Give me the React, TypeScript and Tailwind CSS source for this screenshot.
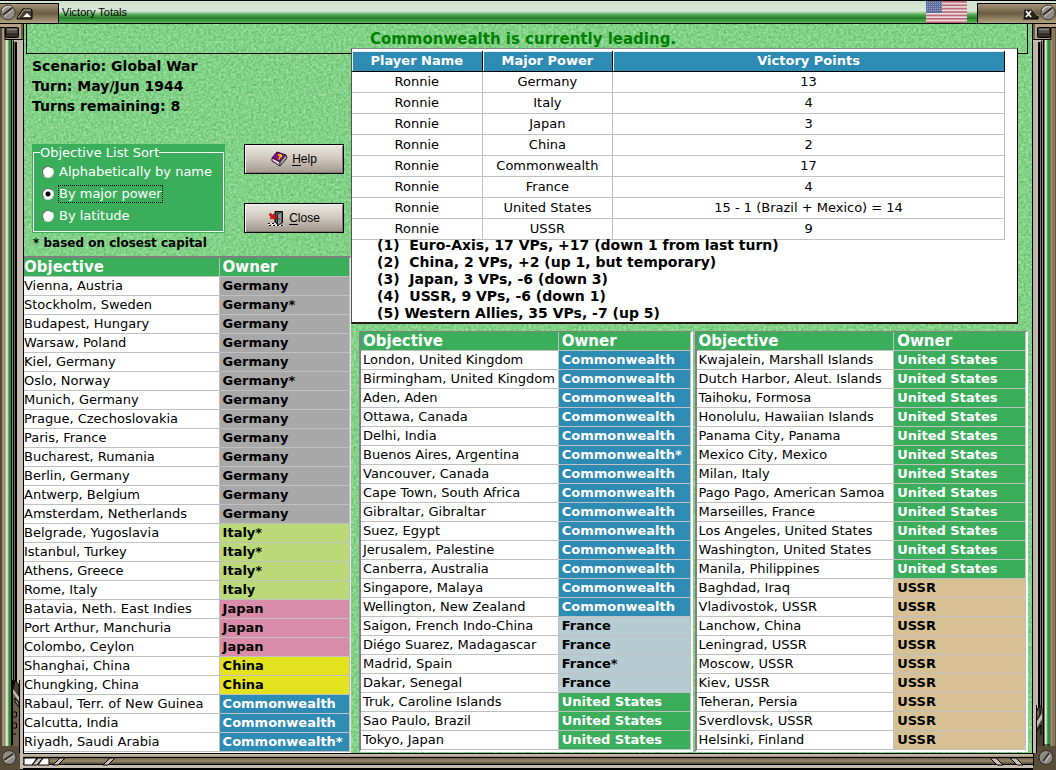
import { useState } from "react";
import type { ReactNode } from "react";

type Row = [objective: string, owner: string];

const OWNER_STYLES: Record<string, string> = {
  Germany: "bg-[#a8a8a8] text-black",
  Italy: "bg-[#bcd97a] text-black",
  Japan: "bg-[#d98ca7] text-black",
  China: "bg-[#e2e21e] text-black",
  Commonwealth: "bg-[#2e8bb4] text-white",
  France: "bg-[#b6cbd2] text-black",
  "United States": "bg-[#3aae5b] text-white",
  USSR: "bg-[#d6c094] text-black",
};

const STANDINGS = [
  ["Ronnie", "Germany", "13"],
  ["Ronnie", "Italy", "4"],
  ["Ronnie", "Japan", "3"],
  ["Ronnie", "China", "2"],
  ["Ronnie", "Commonwealth", "17"],
  ["Ronnie", "France", "4"],
  ["Ronnie", "United States", "15 - 1 (Brazil + Mexico) = 14"],
  ["Ronnie", "USSR", "9"],
];

const NOTES = [
  "(1)  Euro-Axis, 17 VPs, +17 (down 1 from last turn)",
  "(2)  China, 2 VPs, +2 (up 1, but temporary)",
  "(3)  Japan, 3 VPs, -6 (down 3)",
  "(4)  USSR, 9 VPs, -6 (down 1)",
  "(5) Western Allies, 35 VPs, -7 (up 5)",
];

const LEFT_ROWS: Row[] = [
  ["Vienna, Austria", "Germany"],
  ["Stockholm, Sweden", "Germany*"],
  ["Budapest, Hungary", "Germany"],
  ["Warsaw, Poland", "Germany"],
  ["Kiel, Germany", "Germany"],
  ["Oslo, Norway", "Germany*"],
  ["Munich, Germany", "Germany"],
  ["Prague, Czechoslovakia", "Germany"],
  ["Paris, France", "Germany"],
  ["Bucharest, Rumania", "Germany"],
  ["Berlin, Germany", "Germany"],
  ["Antwerp, Belgium", "Germany"],
  ["Amsterdam, Netherlands", "Germany"],
  ["Belgrade, Yugoslavia", "Italy*"],
  ["Istanbul, Turkey", "Italy*"],
  ["Athens, Greece", "Italy*"],
  ["Rome, Italy", "Italy"],
  ["Batavia, Neth. East Indies", "Japan"],
  ["Port Arthur, Manchuria", "Japan"],
  ["Colombo, Ceylon", "Japan"],
  ["Shanghai, China", "China"],
  ["Chungking, China", "China"],
  ["Rabaul, Terr. of New Guinea", "Commonwealth"],
  ["Calcutta, India", "Commonwealth"],
  ["Riyadh, Saudi Arabia", "Commonwealth*"],
];

const MIDDLE_ROWS: Row[] = [
  ["London, United Kingdom", "Commonwealth"],
  ["Birmingham, United Kingdom", "Commonwealth"],
  ["Aden, Aden", "Commonwealth"],
  ["Ottawa, Canada", "Commonwealth"],
  ["Delhi, India", "Commonwealth"],
  ["Buenos Aires, Argentina", "Commonwealth*"],
  ["Vancouver, Canada", "Commonwealth"],
  ["Cape Town, South Africa", "Commonwealth"],
  ["Gibraltar, Gibraltar", "Commonwealth"],
  ["Suez, Egypt", "Commonwealth"],
  ["Jerusalem, Palestine", "Commonwealth"],
  ["Canberra, Australia", "Commonwealth"],
  ["Singapore, Malaya", "Commonwealth"],
  ["Wellington, New Zealand", "Commonwealth"],
  ["Saigon, French Indo-China", "France"],
  ["Diégo Suarez, Madagascar", "France"],
  ["Madrid, Spain", "France*"],
  ["Dakar, Senegal", "France"],
  ["Truk, Caroline Islands", "United States"],
  ["Sao Paulo, Brazil", "United States"],
  ["Tokyo, Japan", "United States"],
];

const RIGHT_ROWS: Row[] = [
  ["Kwajalein, Marshall Islands", "United States"],
  ["Dutch Harbor, Aleut. Islands", "United States"],
  ["Taihoku, Formosa", "United States"],
  ["Honolulu, Hawaiian Islands", "United States"],
  ["Panama City, Panama", "United States"],
  ["Mexico City, Mexico", "United States"],
  ["Milan, Italy", "United States"],
  ["Pago Pago, American Samoa", "United States"],
  ["Marseilles, France", "United States"],
  ["Los Angeles, United States", "United States"],
  ["Washington, United States", "United States"],
  ["Manila, Philippines", "United States"],
  ["Baghdad, Iraq", "USSR"],
  ["Vladivostok, USSR", "USSR"],
  ["Lanchow, China", "USSR"],
  ["Leningrad, USSR", "USSR"],
  ["Moscow, USSR", "USSR"],
  ["Kiev, USSR", "USSR"],
  ["Teheran, Persia", "USSR"],
  ["Sverdlovsk, USSR", "USSR"],
  ["Helsinki, Finland", "USSR"],
];

const SORTS = ["Alphabetically by name", "By major power", "By latitude"];

export default function App() {
  return (
    <div className="flex min-h-screen flex-col bg-black font-['DejaVu_Sans',Verdana,sans-serif] text-black">
      <TitleBar />
      <div className="flex grow">
        <LeftRail />
        <main className="relative isolate min-w-0 grow bg-[#7dd083]">
          <Texture />
          <header className="mr-1 ml-[2px] h-[30px] border border-t-0 border-black pr-2 text-center text-[15px] leading-[30px] font-bold text-[#008000]">
            Commonwealth is currently leading.
          </header>
          <div className="grid grid-cols-[327fr_681fr]">
            <div className="flex min-w-0 flex-col">
              <Summary />
              <ObjectiveTable rows={LEFT_ROWS} flush />
            </div>
            <div className="-mt-[6px] flex min-w-0 flex-col gap-[7px]">
              <Standings />
              <div className="mr-1 ml-2 grid grid-cols-2 gap-[2px]">
                <ObjectiveTable rows={MIDDLE_ROWS} />
                <ObjectiveTable rows={RIGHT_ROWS} />
              </div>
            </div>
          </div>
        </main>
        <RightRail />
      </div>
      <BottomBar />
    </div>
  );
}

function Texture() {
  return (
    <svg className="absolute inset-0 -z-10 h-full w-full" aria-hidden="true">
      <filter id="grain" x="0" y="0" width="100%" height="100%" colorInterpolationFilters="sRGB">
        <feTurbulence type="fractalNoise" baseFrequency="0.4" numOctaves="2" seed="4" />
        <feColorMatrix values="0.42 0 0 0 0.3  0.22 0 0 0 0.71  0.4 0 0 0 0.33  0 0 0 0 1" />
      </filter>
      <rect width="100%" height="100%" filter="url(#grain)" />
    </svg>
  );
}

function Summary() {
  const [sort, setSort] = useState(SORTS[1]);

  return (
    <section className="h-[202px] pt-[2px] pl-2">
      <div className="h-[88px] text-sm leading-5 font-bold">
        <p>Scenario: Global War</p>
        <p>Turn: May/Jun 1944</p>
        <p>Turns remaining: 8</p>
      </div>
      <div className="flex justify-between pr-[7px]">
        <div className="h-[89px] w-[193px] bg-[#3aae5b] px-px text-[13px] text-white">
          <fieldset className="h-[88px] border border-white pl-2">
            <legend className="-ml-[2px] leading-[17px]">Objective List Sort</legend>
            {SORTS.map((name) => (
              <label key={name} className="flex h-[22px] items-center gap-1 whitespace-nowrap">
                <input
                  type="radio"
                  name="sort"
                  checked={sort === name}
                  onChange={() => setSort(name)}
                  className="size-3 shrink-0 appearance-none rounded-full border border-t-[#666] border-r-[#ddd] border-b-[#ddd] border-l-[#666] bg-white checked:bg-[radial-gradient(circle,#000_2px,#fff_3px)]"
                />
                <span
                  className={
                    sort === name
                      ? "border border-dotted border-black leading-[16px]"
                      : "border border-transparent leading-[16px]"
                  }
                >
                  {name}
                </span>
              </label>
            ))}
          </fieldset>
        </div>
        <div className="flex flex-col justify-between">
          <PushButton icon={<BookIcon />} hotkey="H" rest="elp" />
          <PushButton icon={<DoorIcon />} hotkey="C" rest="lose" />
        </div>
      </div>
      <p className="pl-px text-xs leading-[21px] font-bold">* based on closest capital</p>
    </section>
  );
}

function PushButton({ icon, hotkey, rest }: { icon: ReactNode; hotkey: string; rest: string }) {
  return (
    <button
      type="button"
      className="flex h-[30px] w-[100px] items-center justify-center gap-1 border border-black bg-linear-to-b from-[#ece7e0] via-[#cfc7be] to-[#a0968b] font-['Liberation_Sans',Arial,sans-serif] text-xs shadow-[inset_1px_1px_0_#f4f0ea,inset_-1px_-1px_0_#857b70]"
    >
      {icon}
      <span>
        <span className="underline underline-offset-2">{hotkey}</span>
        {rest}
      </span>
    </button>
  );
}

function Standings() {
  return (
    <section className="mr-[14px] h-[276px] border-t border-r border-b-2 border-l border-t-[#888] border-r-black border-b-[#2a1a14] border-l-[#555] bg-white pt-[2px]">
      <div className="pr-3">
        <table className="w-full table-fixed border-separate border-spacing-0 text-center text-[13px]">
          <thead>
            <tr className="h-[21px] bg-[#2e8bb4] text-white">
              <StandingHead className="w-[20%]">Player Name</StandingHead>
              <StandingHead className="w-[20%]">Major Power</StandingHead>
              <StandingHead>Victory Points</StandingHead>
            </tr>
          </thead>
          <tbody>
            {STANDINGS.map(([player, power, points]) => (
              <tr key={power} className="h-[21px]">
                {[player, power, points].map((cell, i) => (
                  <td key={i} className="border-r border-b border-[#c0c0c0] p-0 leading-5">
                    {cell}
                  </td>
                ))}
              </tr>
            ))}
          </tbody>
        </table>
      </div>
      <div className="-mt-[3px] pl-[25px] text-sm leading-[17px] font-bold whitespace-pre">
        {NOTES.map((note) => (
          <p key={note}>{note}</p>
        ))}
      </div>
    </section>
  );
}

function StandingHead({ className = "", children }: { className?: string; children: ReactNode }) {
  return (
    <th
      className={`border-r border-b border-black p-0 leading-5 font-bold shadow-[inset_1px_1px_0_#e8f2f6] ${className}`}
    >
      {children}
    </th>
  );
}

function ObjectiveTable({ rows, flush = false }: { rows: Row[]; flush?: boolean }) {
  const frame = flush
    ? "border-t-2 border-r border-b border-t-[#808080] border-r-[#e8e8e8] border-b-white"
    : "border-t border-r-2 border-b-2 border-l-2 border-t-[#808080] border-r-white border-b-white border-l-[#808080]";
  const pad = flush ? "pl-0" : "pl-[2px]";

  return (
    <div className={`min-w-0 bg-white ${frame}`}>
      <table className="w-full table-fixed border-separate border-spacing-0 text-left text-[13px] whitespace-nowrap">
        <thead>
          <tr className="h-[19px] bg-[#3aae5b] text-[15px] text-white">
            <th className={`w-[60%] border-r border-b border-[#c0c0c0] py-0 pr-0 leading-[18px] ${pad}`}>Objective</th>
            <th className="border-r border-b border-[#c0c0c0] py-0 pr-0 pl-[3px] leading-[18px]">Owner</th>
          </tr>
        </thead>
        <tbody>
          {rows.map(([objective, owner]) => (
            <tr key={objective} className="h-[19px]">
              <td className={`border-r border-b border-[#c0c0c0] py-0 pr-0 leading-[18px] ${pad}`}>{objective}</td>
              <td
                className={`border-r border-b border-[#c0c0c0] py-0 pr-0 pl-[3px] leading-[18px] font-bold ${OWNER_STYLES[owner.replace("*", "")]}`}
              >
                {owner}
              </td>
            </tr>
          ))}
        </tbody>
      </table>
    </div>
  );
}

function TitleBar() {
  return (
    <div className="flex h-6 items-stretch border-t border-b border-black bg-[linear-gradient(#cfe3cd_0px,#d9e8d8_10px,#8cc68c_12px,#4ba64d_14px,#2b7c2d_17px,#3c983f_19px,#58b85b_22px)]">
      <div className="mt-[2px] flex w-[59px] items-center border-t border-r border-black bg-linear-to-b from-[#a59474] via-[#6b5c42] to-[#b3a282]">
        <Screw />
        <button type="button" aria-label="Roll up">
          <svg width="18" height="14" viewBox="0 0 18 14">
            <path d="M1 11 L7 2 H15 L16 3 V12 H1 Z" fill="#453c2f" stroke="#000" />
            <path d="M2 11 L8 3 H15" fill="none" stroke="#c8bda5" />
            <path d="M7 10 L11 6 L15 10 Z" fill="#fff" />
          </svg>
        </button>
      </div>
      <h1 className="grow pl-[3px] font-['Liberation_Sans',Arial,sans-serif] text-[11px] leading-[22px]">
        Victory Totals
      </h1>
      <Flag />
      <div className="mt-[2px] ml-[10px] flex w-[79px] items-center justify-end border-t border-l border-black bg-linear-to-b from-[#a59474] via-[#6b5c42] to-[#b3a282]">
        <button type="button" aria-label="Close window">
          <svg width="18" height="14" viewBox="0 0 18 14">
            <path d="M1 2 H10 L16 9 V12 H1 Z" fill="#2a241c" stroke="#000" />
            <path d="M1 12 V2 H10 L16 9" fill="none" stroke="#b5a88c" />
            <path d="M4 4 L9 10 M9 4 L4 10" stroke="#fff" strokeWidth="1.6" />
          </svg>
        </button>
        <Screw />
      </div>
    </div>
  );
}

function Screw() {
  return (
    <svg width="16" height="17" viewBox="0 0 16 17" className="mb-[3px] shrink-0 overflow-visible" aria-hidden="true">
      <circle cx="8" cy="8.5" r="7.2" fill="#8f8c86" stroke="#3d382f" />
      <path d="M2.5 7 A6 6 0 0 1 11 3" fill="none" stroke="#d4d1ca" strokeWidth="1.4" />
      <path d="M3 11 L12 4" stroke="#2f2c27" strokeWidth="1.6" />
      <path d="M4 12.5 L13 5.5" stroke="#d2cfc8" />
    </svg>
  );
}

function Flag() {
  return (
    <svg width="41" height="22" viewBox="0 0 41 22" aria-label="United States flag" role="img">
      <rect width="41" height="22" fill="#e3dfdd" />
      {[0, 1, 2, 3, 4, 5, 6].map((i) => (
        <rect key={i} y={i * 3.4} width="41" height="1.7" fill="#c2667a" />
      ))}
      <rect width="16" height="12" fill="#5d6d9e" />
      {[2, 4, 6, 8, 10].map((y) => (
        <path key={y} d={`M1 ${y - 0.5} H16`} stroke="#95a1c0" strokeDasharray="1 1" />
      ))}
    </svg>
  );
}

function LeftRail() {
  return (
    <div className="flex w-6 shrink-0 flex-col bg-[linear-gradient(90deg,#51473a_0px,#51473a_2px,#9b8a6a_2px,#b09e7c_4px,#7c6d52_5px,#dfead8_6px,#dfead8_7px,#a5cfa0_8px,#2f8d35_9px,#2f8d35_11px,#000_11px,#000_12px,#94866c_12px,#94866c_13px,#000_13px,#000_14px,#7a6d55_14px,#7a6d55_15px,#000_15px,#000_17px,#c6bcb2_17px,#c6bcb2_23px,#000_23px)]">
      <svg width="24" height="18" viewBox="0 0 24 18" aria-hidden="true">
        <path d="M0 0 H24 V15 H5 V3 H0 Z" fill="#b3a286" />
        <path d="M0 3.5 H5 V15.5 H23" fill="none" stroke="#000" />
        <path d="M22 0 V15" stroke="#6d6048" strokeWidth="2" />
        <rect x="5.5" y="3.5" width="13" height="10" rx="1" fill="#332e28" stroke="#000" />
        <path d="M7 5.5 H17" stroke="#8e8780" strokeWidth="2" />
        <path d="M7 8 H17" stroke="#57504a" strokeWidth="2" />
        <path d="M13 16 H23 V18 H15 Z" fill="#c6bcb2" />
        <path d="M23.5 0 V18" stroke="#000" />
      </svg>
      <svg width="24" height="73" viewBox="0 0 24 73" className="mt-auto" aria-hidden="true">
        <rect x="12" y="5" width="8" height="68" fill="#6d6048" />
        <path d="M12.5 0 V65" stroke="#000" />
        <path d="M15 0 L19 5 V18 L13 10 Z" fill="#4a4132" stroke="#000" />
        <path d="M13 9 L19 17 V21 L13 13 Z" fill="#c6bcb2" />
        <path d="M15 18 L19 23 V27 L15 22 Z" fill="#94866c" stroke="#000" />
        <path d="M12 32 H16 M12 37 H16 M12 43 H16 M12 48 H16 M12 54 H16 M16.5 32 V37 M16.5 43 V48" stroke="#000" />
        <path d="M0 66 H20 V73 H0 Z" fill="#594d39" />
        <path d="M21.5 0 V73" stroke="#c6bcb2" strokeWidth="3" />
        <path d="M19.5 0 V73 M23.5 0 V73" stroke="#000" />
      </svg>
    </div>
  );
}

function RightRail() {
  return (
    <div className="flex w-6 shrink-0 flex-col bg-[linear-gradient(90deg,#000_0px,#000_1px,#b8aea2_1px,#c6bcb2_6px,#000_6px,#000_8px,#7a6d55_8px,#94866c_9px,#000_9px,#000_10px,#94866c_10px,#94866c_11px,#000_11px,#000_12px,#dfead8_13px,#dfead8_14px,#7dbb7c_15px,#2f8d35_16px,#2f8d35_18px,#6b5d45_18px,#b09e7c_20px,#6b5d45_21px,#9b8a6a_22px,#51473a_24px)]">
      <svg width="24" height="18" viewBox="0 0 24 18" aria-hidden="true">
        <path d="M0 0 H24 V3 H19 V15 H0 Z" fill="#b3a286" />
        <path d="M24 3.5 H19 V15.5 H1" fill="none" stroke="#000" />
        <path d="M2 0 V15" stroke="#6d6048" strokeWidth="2" />
        <rect x="5.5" y="3.5" width="13" height="10" rx="1" fill="#332e28" stroke="#000" />
        <path d="M7 5.5 H17" stroke="#8e8780" strokeWidth="2" />
        <path d="M7 8 H17" stroke="#57504a" strokeWidth="2" />
        <path d="M1 16 H11 L8 18 H1 Z" fill="#c6bcb2" />
        <path d="M.5 0 V18" stroke="#000" />
      </svg>
      <svg width="24" height="48" viewBox="0 0 24 48" className="mt-auto" aria-hidden="true">
        <rect x="4" y="3" width="7" height="45" fill="#4a4132" />
        <path d="M4 8 L8 0 V10 L4 16 Z" fill="#6d6048" stroke="#000" />
        <path d="M4 18 L10 8 V14 L4 24 Z" fill="#c6bcb2" />
        <path d="M5 26 L9 20 V30" fill="none" stroke="#000" />
        <path d="M4 41 H24 V48 H4 Z" fill="#594d39" />
        <path d="M11.5 0 V40 H18" fill="none" stroke="#000" />
        <path d="M0 0 H4 V48 H0 Z" fill="#c6bcb2" />
        <path d="M.5 0 V48 M4.5 0 V48" stroke="#000" />
      </svg>
    </div>
  );
}

function BottomBar() {
  return (
    <div className="relative flex h-[17px] justify-between bg-[linear-gradient(#000_0px,#000_1px,#d2c8ba_1px,#a09276_4px,#000_4px,#000_5px,#6f6146_5px,#9a8a6a_8px,#4d4230_11px,#000_11px,#000_12px,#c6bcb2_12px,#c6bcb2_15px,#000_15px)]">
      <svg width="120" height="17" viewBox="0 0 120 17" className="overflow-visible" aria-hidden="true">
        <rect width="20" height="17" fill="#594d39" />
        <path d="M21.5 0 V16" stroke="#c6bcb2" strokeWidth="3" />
        <path d="M24 5 H37 L32 12 H24 Z M43 5 H49 V12 H38 Z" fill="#fff" stroke="#000" />
        <path d="M38 5 H43 L37 12 H32 Z M60 5 H65 L58 12 H53 Z M110 5 H115 L108 12 H103 Z" fill="#c6bcb2" stroke="#000" />
        <circle cx="9" cy="4.5" r="7" fill="#8f8c86" stroke="#2d2922" />
        <path d="M4 7 L13 1" stroke="#2f2c27" strokeWidth="1.6" />
        <path d="M5 8.5 L14 2.5" stroke="#d2cfc8" />
      </svg>
      <svg width="72" height="17" viewBox="0 0 72 17" className="overflow-visible" aria-hidden="true">
        <path d="M6 5 H12 L19 12 H13 Z M26 5 H32 L39 12 H33 Z" fill="#c6bcb2" stroke="#000" />
        <rect x="49" width="23" height="17" fill="#594d39" />
        <path d="M49.5 0 V13" stroke="#000" />
        <circle cx="62" cy="4.5" r="7" fill="#8f8c86" stroke="#2d2922" />
        <path d="M59 8 L65 0" stroke="#2f2c27" strokeWidth="1.6" />
        <path d="M61 9 L66 2" stroke="#d2cfc8" />
      </svg>
    </div>
  );
}

function BookIcon() {
  return (
    <svg width="17" height="16" viewBox="0 0 17 16" aria-hidden="true">
      <path d="M1 7 L6 1 L15 4 L9 11 Z" fill="#86107e" stroke="#300030" />
      <path d="M1 7 V10 L9 15 V11 Z" fill="#fff" stroke="#300030" />
      <path d="M9 11 L15 4 L16 7 L9 15 Z" fill="#c0c0c0" stroke="#222" />
      <path d="M2 9.5 L9 13.5 L15 6.5" fill="none" stroke="#777" strokeWidth=".7" />
      <path d="M7 4.5 Q9 3 10.5 4.5 Q10.5 6 8 6.5 M7.5 8 H8.8" fill="none" stroke="#ffe000" strokeWidth="1.4" />
    </svg>
  );
}

function DoorIcon() {
  return (
    <svg width="17" height="17" viewBox="0 0 17 17" aria-hidden="true">
      <path d="M7 13 V1.5 H14.5 V13" fill="#555" stroke="#000" />
      <path d="M9.5 4 L14 1.5 V13 L9.5 15.5 Z" fill="#8c9494" stroke="#222" />
      <path d="M10.5 9 H11.5" stroke="#000" />
      <path d="M1 4.5 L2.5 3 L4.500 5 L6 4 L9 9 L2 8.500 L3 7 Z" fill="#e81010" stroke="#700" strokeWidth=".5" />
      <path d="M0 13.5 H9 M1 15.5 H16" stroke="#000" strokeDasharray="2 2" />
      <path d="M2 13.5 H9 M3 15.5 H16" stroke="#fff" strokeDasharray="2 2" />
      <path d="M0 14.5 H9" stroke="#fff" strokeDasharray="2 2" />
    </svg>
  );
}
